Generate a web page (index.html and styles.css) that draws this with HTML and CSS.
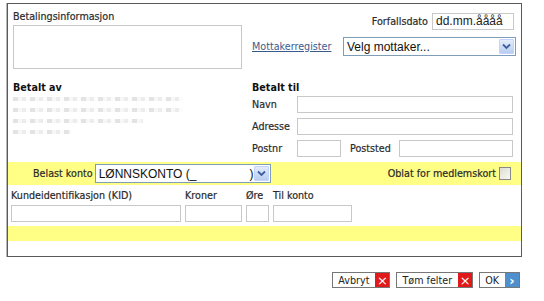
FILE: index.html
```html
<!doctype html>
<html lang="no">
<head>
    <meta charset="UTF-8">
    <title>Betaling</title>
    <link rel="stylesheet" href="styles.css">
</head>
<body>
    <div class="frame">
        <div class="top">
            <div class="info">
                <p class="label">Betalingsinformasjon</p>
                <div class="field info__text"></div>
            </div>
            <div class="meta">
                <div class="meta__row meta__row--date">
                    <span class="label">Forfallsdato</span>
                    <div class="field date">dd.mm.åååå</div>
                </div>
                <div class="meta__row">
                    <a href="#" class="link">Mottakerregister</a>
                    <div class="dropdown dropdown--wide">
                        <span class="dropdown__value">Velg mottaker...</span>
                        <span class="dropdown__arrow"><svg width="9" height="7" viewBox="0 0 9 7"><path d="M1 1.5 L4.5 5 L8 1.5" fill="none" stroke="#3b5fa0" stroke-width="1.8"/></svg></span>
                    </div>
                </div>
            </div>
        </div>

        <div class="parties">
            <div class="payer">
                <p class="heading">Betalt av</p>
                <div class="smudge smudge--1"></div>
                <div class="smudge smudge--2"></div>
                <div class="smudge smudge--3"></div>
                <div class="smudge smudge--4"></div>
            </div>
            <div class="payee">
                <p class="heading">Betalt til</p>
                <div class="payee__row">
                    <span class="label payee__label">Navn</span>
                    <div class="field payee__full"></div>
                </div>
                <div class="payee__row">
                    <span class="label payee__label">Adresse</span>
                    <div class="field payee__full"></div>
                </div>
                <div class="payee__row">
                    <span class="label payee__label">Postnr</span>
                    <div class="field payee__zip"></div>
                    <span class="label payee__city-label">Poststed</span>
                    <div class="field payee__city"></div>
                </div>
            </div>
        </div>

        <div class="band band--account">
            <span class="label">Belast konto</span>
            <div class="dropdown dropdown--account">
                <span class="dropdown__value">LØNNSKONTO (<span class="hidden-no">_</span><span class="hidden-gap"></span>)</span>
                <span class="dropdown__arrow"><svg width="9" height="7" viewBox="0 0 9 7"><path d="M1 1.5 L4.5 5 L8 1.5" fill="none" stroke="#3b5fa0" stroke-width="1.8"/></svg></span>
            </div>
            <span class="label oblat">Oblat for medlemskort</span>
            <span class="check"></span>
        </div>

        <div class="amounts">
            <span class="label">Kundeidentifikasjon (KID)</span>
            <span class="label">Kroner</span>
            <span class="label">Øre</span>
            <span class="label">Til konto</span>
            <div class="field"></div>
            <div class="field"></div>
            <div class="field"></div>
            <div class="field"></div>
        </div>

        <div class="band band--thin"></div>
    </div>

    <div class="actions">
        <button type="button" class="btn">
            <span class="btn__text">Avbryt</span>
            <span class="btn__icon btn__icon--red">×</span>
        </button>
        <button type="button" class="btn">
            <span class="btn__text">Tøm felter</span>
            <span class="btn__icon btn__icon--red">×</span>
        </button>
        <button type="button" class="btn">
            <span class="btn__text">OK</span>
            <span class="btn__icon btn__icon--blue">›</span>
        </button>
    </div>
</body>
</html>
```

FILE: styles.css
```css
body {
    margin: 0;
    background: #fff;
    font-family: "DejaVu Sans", Verdana, sans-serif;
    font-size: 9.6px;
    color: #2a2a2a;
}

p {
    margin: 0;
}

.frame {
    margin: 3px 0 0 7px;
    width: 513px;
    height: 252px;
    border: 1px solid #5a5a5a;
    box-shadow: -1px 0 0 #b8b8b8;
}

.label {
    line-height: 12px;
    white-space: nowrap;
    -webkit-text-stroke: 0.2px #2a2a2a;
}

.field {
    box-sizing: border-box;
    height: 17px;
    border: 1px solid #c8c8c8;
    background: #fff;
}

/* top part */

.top {
    display: flex;
    padding: 7px 7px 0 5px;
}

.info {
    width: 229px;
}

.info__text {
    margin-top: 2px;
    height: 44px;
}

.meta {
    flex: 1;
    margin-left: 10px;
}

.meta__row {
    display: flex;
    align-items: center;
}

.meta__row--date {
    justify-content: flex-end;
    margin-top: 2px;
}

.date {
    width: 82px;
    margin-left: 4px;
    padding: 0 3px;
    font-family: "Liberation Sans", Arial, sans-serif;
    font-size: 12px;
    line-height: 15px;
    color: #222;
}

.link {
    color: #3a5a8c;
    line-height: 12px;
    margin-top: 1px;
}

.meta__row + .meta__row {
    margin-top: 7px;
}

.dropdown {
    box-sizing: border-box;
    display: flex;
    align-items: center;
    height: 19px;
    border: 1px solid #7f9db9;
    background: #fff;
    font-family: "Liberation Sans", Arial, sans-serif;
    font-size: 12px;
    color: #111;
}

.dropdown--wide {
    margin-left: auto;
    margin-right: -2px;
    width: 173px;
}

.dropdown__value {
    flex: 1;
    padding-left: 3px;
    white-space: nowrap;
}

.dropdown__arrow {
    box-sizing: border-box;
    width: 15px;
    height: 15px;
    margin-right: 1px;
    display: flex;
    align-items: center;
    justify-content: center;
    background: linear-gradient(#e3ecfb, #b9cdf1);
    border: 1px solid #c3d3fd;
    border-radius: 1px;
}

/* parties */

.parties {
    display: flex;
    margin-top: 13px;
    padding-left: 5px;
}

.heading {
    font-weight: bold;
    color: #111;
    line-height: 12px;
}

.payer {
    width: 239px;
}

.smudge {
    height: 4px;
    margin-top: 7px;
    background: repeating-linear-gradient(90deg, #dadada 0 5px, #f4f4f4 5px 9px, #e6e6e6 9px 13px, #fbfbfb 13px 17px);
    opacity: 0.75;
}

.smudge--1 {
    width: 170px;
    margin-top: 3px;
}

.smudge--2 {
    width: 170px;
}

.smudge--3 {
    width: 130px;
}

.smudge--4 {
    width: 58px;
}

.payee {
    flex: 1;
}

.payee__row {
    display: flex;
    align-items: center;
    margin-top: 5px;
}

.heading + .payee__row {
    margin-top: 2px;
}

.payee__label {
    width: 45px;
}

.payee__full {
    width: 216px;
}

.payee__zip {
    width: 44px;
}

.payee__city-label {
    margin-left: 9px;
    width: 49px;
}

.payee__city {
    width: 114px;
}

/* yellow bands */

.band {
    background: #ffff85;
}

.band--account {
    display: flex;
    align-items: center;
    height: 23px;
    margin-top: 5px;
    padding: 0 10px 0 25px;
}

.dropdown--account {
    width: 176px;
    margin-left: 2px;
}

.hidden-no {
    letter-spacing: 1px;
}

.hidden-gap {
    display: inline-block;
    width: 52px;
}

.oblat {
    margin-left: auto;
    margin-right: 3px;
}

.check {
    width: 12px;
    height: 13px;
    box-sizing: border-box;
    border: 1px solid #888;
    background: linear-gradient(135deg, #dcdcd4, #fafaf5);
}

.amounts {
    display: grid;
    grid-template-columns: 170px 57px 23px 79px;
    grid-template-rows: 20px 17px;
    column-gap: 4px;
    padding: 0 0 0 3px;
    align-items: end;
}

.amounts .label {
    align-self: center;
    padding-top: 2px;
}

.band--thin {
    height: 15px;
    margin-top: 4px;
}

/* buttons */

.actions {
    display: flex;
    justify-content: flex-end;
    gap: 6px;
    margin: 15px 0 0;
    padding-right: 24px;
}

.btn {
    display: flex;
    align-items: stretch;
    height: 16px;
    padding: 0;
    border: 1px solid #777;
    background: #fff;
    font-family: "DejaVu Sans", Verdana, sans-serif;
    font-size: 9.6px;
    color: #222;
}

.btn__text {
    display: flex;
    align-items: center;
    padding: 0 6px 0 5px;
}

.btn__icon {
    width: 14px;
    display: flex;
    align-items: center;
    justify-content: center;
    color: #fff;
    font-size: 13px;
    line-height: 1;
}

.btn__icon--red {
    background: #e0191b;
}

.btn__icon--blue {
    background: #4f8fce;
    font-weight: bold;
}
```
